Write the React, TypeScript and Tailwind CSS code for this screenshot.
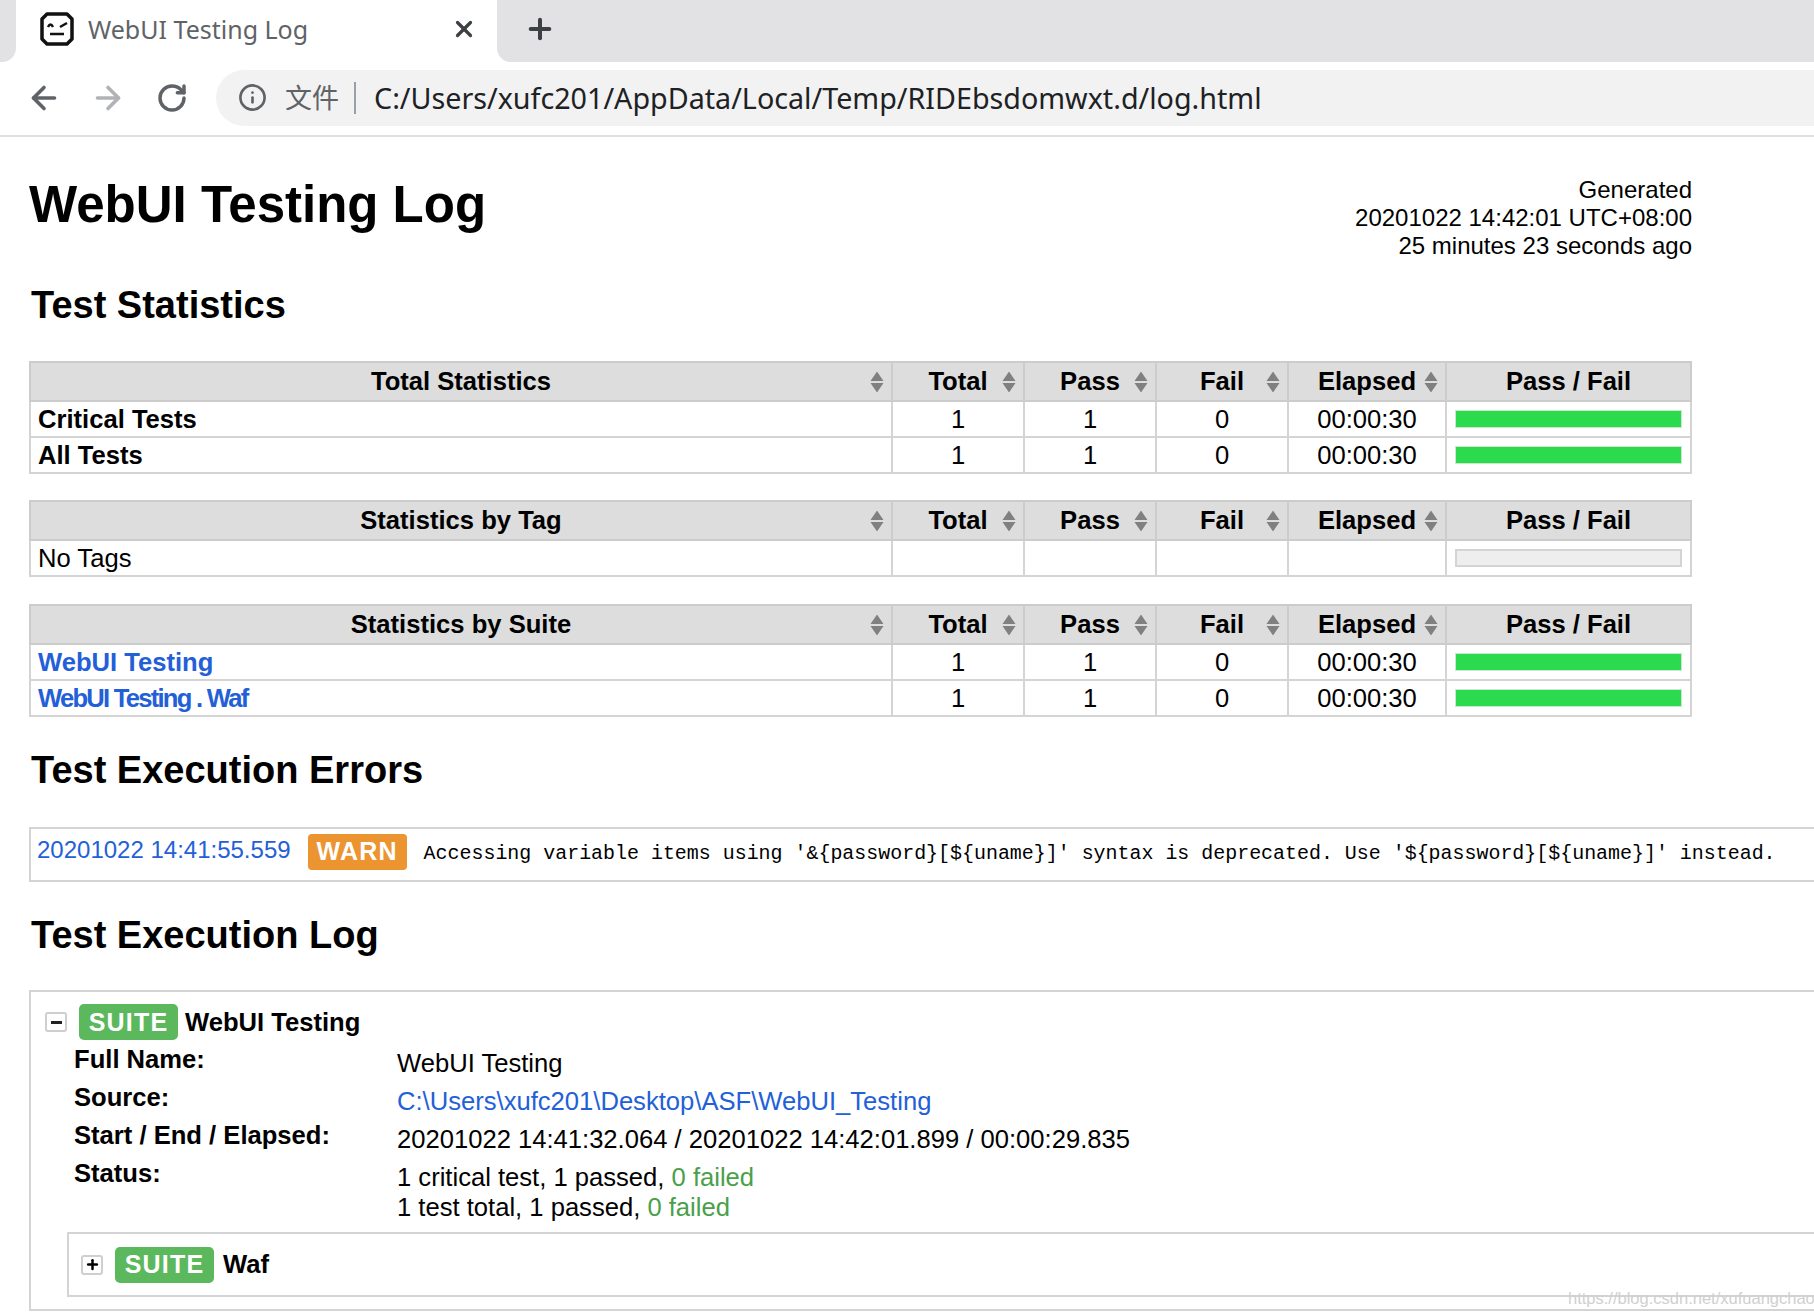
import React from "react";
import { ArrowLeft, ArrowRight, RotateCw, Info, X, Plus } from "lucide-react";

const sans = "font-['Liberation_Sans',Arial,sans-serif]";
const warnMessage = "Accessing variable items using '&{password}[${uname}]' syntax is deprecated. Use '${password}[${uname}]' instead.";

function SortIcon() {
  return (
    <svg className="absolute right-[7px] top-1/2 -translate-y-1/2" width="14" height="21" viewBox="0 0 14 21">
      <path d="M7 0 L13.500 9.500 H0.500 Z M7 21 L13.500 11.500 H0.500 Z" fill="#808080" />
    </svg>
  );
}

function RobotIcon() {
  return (
    <svg width="34" height="34" viewBox="0 0 34 34" fill="none" stroke="#111" strokeWidth="3.500">
      <path d="M7 2 H27 L32 7 V27 L27 32 H7 L2 27 V7 Z" strokeLinejoin="round" />
      <path d="M8 15 Q10.500 10 13 15 M20 15 L27 11 M10 22 H24" strokeWidth="2.500" />
    </svg>
  );
}

function Chrome() {
  return (
    <div className="bg-white">
      <div className="flex h-[62px]">
        <div className="w-[16px] bg-[#e2e2e4] rounded-br-[14px]" />
        <div className="w-[481px] rounded-t-[14px] bg-white flex items-center pl-[24px] pr-[20px] pb-[4px]">
          <RobotIcon />
          <span className="ml-[14px] pt-[2px] flex-1 font-['Noto_Sans',sans-serif] text-[25px] tracking-[0px] text-[#5f6368]">WebUI Testing Log</span>
          <X size={26} strokeWidth={3} className="text-[#3c4043]" />
        </div>
        <div className="flex-1 bg-[#e2e2e4] rounded-bl-[14px] flex items-center pl-[27px] pb-[4px]">
          <Plus size={32} strokeWidth={3} className="text-[#3c4043]" />
        </div>
      </div>
      <div className="h-[75px] border-b-2 border-[#e0e0e0] flex items-center pl-[26px] pb-[2px]">
        <ArrowLeft size={36} strokeWidth={2.400} className="text-[#5f6368]" />
        <ArrowRight size={36} strokeWidth={2.400} className="ml-[28px] text-[#b0b2b5]" />
        <RotateCw size={32} strokeWidth={2.600} className="ml-[30px] text-[#5f6368]" />
        <div className="ml-[28px] flex-1 h-[56px] rounded-l-[28px] bg-[#f2f2f2] flex items-center pl-[22px]">
          <Info size={29} strokeWidth={2.200} className="text-[#5f6368]" />
          <span className="ml-[18px] font-['Noto_Sans_CJK_SC',sans-serif] text-[27px] text-[#5f6368]">文件</span>
          <div className="ml-[15px] w-[2px] h-[32px] bg-[#9aa0a6]" />
          <span className="ml-[18px] font-['Noto_Sans',sans-serif] text-[28.700px] text-[#202124]">C:/Users/xufc201/AppData/Local/Temp/RIDEbsdomwxt.d/log.html</span>
        </div>
      </div>
    </div>
  );
}

function Bar({ empty }: { empty?: boolean }) {
  return (
    <div className={empty ? "h-[18px] mx-[8px] bg-[#eeeeee] border-2 border-[#d4d4d4]" : "h-[18px] mx-[8px] bg-[#2bdb4d] border border-[#c9e8cf]"} />
  );
}

type Row = { name: React.ReactNode; stats?: boolean };

function StatsTable({ title, rows }: { title: string; rows: Row[] }) {
  const head = ["Total", "Pass", "Fail", "Elapsed"];
  return (
    <table className="table-fixed border-collapse w-[1661px] text-[25.600px] leading-[30px] text-black">
      <colgroup>
        <col className="w-[862px]" />
        <col className="w-[132px]" />
        <col className="w-[132px]" />
        <col className="w-[132px]" />
        <col className="w-[158px]" />
        <col className="w-[245px]" />
      </colgroup>
      <thead>
        <tr className="h-[39px] bg-[#dddddd]">
          <th className="relative border-2 border-[#cccccc] font-bold pb-[2px]">
            {title}
            <SortIcon />
          </th>
          {head.map((h) => (
            <th key={h} className="relative border-2 border-[#cccccc] font-bold pb-[2px]">
              {h}
              <SortIcon />
            </th>
          ))}
          <th className="border-2 border-[#cccccc] font-bold pb-[2px]">Pass / Fail</th>
        </tr>
      </thead>
      <tbody>
        {rows.map((r, i) => (
          <tr key={i} className="h-[36px]">
            <td className="border-2 border-[#d4d4d4] pl-[7px] pb-[1px]">{r.name}</td>
            <td className="border-2 border-[#d4d4d4] text-center pb-[1px]">{r.stats ? "1" : ""}</td>
            <td className="border-2 border-[#d4d4d4] text-center pb-[1px]">{r.stats ? "1" : ""}</td>
            <td className="border-2 border-[#d4d4d4] text-center pb-[1px]">{r.stats ? "0" : ""}</td>
            <td className="border-2 border-[#d4d4d4] text-center pb-[1px]">{r.stats ? "00:00:30" : ""}</td>
            <td className="border-2 border-[#d4d4d4]">
              <Bar empty={!r.stats} />
            </td>
          </tr>
        ))}
      </tbody>
    </table>
  );
}

function Toggle({ sign }: { sign: string }) {
  return (
    <span className="w-[22px] h-[20px] rounded-[3px] border-2 border-[#cfcfcf] flex items-center justify-center">
      {sign === "+" ? <Plus size={15} strokeWidth={4} /> : <span className="w-[11px] h-[3px] bg-[#222]" />}
    </span>
  );
}

function SuiteBadge() {
  return (
    <span className="w-[99px] h-[36px] rounded-[5px] bg-[#5cb85c] text-white font-bold text-[25px] tracking-[1.200px] flex items-center justify-center">
      SUITE
    </span>
  );
}

function Meta({ label, children }: { label: string; children: React.ReactNode }) {
  return (
    <div className="grid grid-cols-[323px_1fr] leading-[30px] pb-[8px]">
      <div className="font-bold -mt-[4px]">{label}</div>
      <div>{children}</div>
    </div>
  );
}

export default function App() {
  return (
    <div className={`relative w-[1814px] h-[1316px] overflow-hidden bg-white text-black ${sans}`}>
      <Chrome />
      <main className="pl-[29px]">
        <div className="flex justify-between items-start w-[1663px] pt-[39px] h-[146px]">
          <h1 className="font-bold text-[51px] leading-[60px] -mt-[1px]">WebUI Testing Log</h1>
          <div className="text-right text-[24px] leading-[28px]">
            <div>Generated</div>
            <div>20201022 14:42:01 UTC+08:00</div>
            <div>25 minutes 23 seconds ago</div>
          </div>
        </div>
        <h2 className="font-bold text-[38px] leading-[44px] h-[78px] pl-[2px]">Test Statistics</h2>
        <StatsTable
          title="Total Statistics"
          rows={[
            { name: <b>Critical Tests</b>, stats: true },
            { name: <b>All Tests</b>, stats: true },
          ]}
        />
        <div className="h-[26px]" />
        <StatsTable title="Statistics by Tag" rows={[{ name: "No Tags" }]} />
        <div className="h-[27px]" />
        <StatsTable
          title="Statistics by Suite"
          rows={[
            { name: <b className="text-[#2360d8]">WebUI Testing</b>, stats: true },
            { name: <b className="text-[#2360d8] tracking-[-1.750px]">WebUI Testing . Waf</b>, stats: true },
          ]}
        />
        <h2 className="font-bold text-[38px] leading-[44px] mt-[31px] h-[79px] pl-[2px]">Test Execution Errors</h2>
        <div className="h-[55px] border-2 border-r-0 border-[#d4d4d4] flex items-center pl-[6px]">
          <span className="text-[24px] text-[#2360d8] -mt-[10px]">20201022 14:41:55.559</span>
          <span className="ml-[17px] -mt-[5px] w-[99px] h-[36px] rounded-[4px] bg-[#ec9430] text-white font-bold text-[25px] tracking-[1.200px] flex items-center justify-center">WARN</span>
          <span className="ml-[17px] -mt-[2px] font-['Liberation_Mono',monospace] text-[19.950px] whitespace-nowrap">{warnMessage}</span>
        </div>
        <h2 className="font-bold text-[38px] leading-[44px] mt-[31px] h-[77px] pl-[2px]">Test Execution Log</h2>
        <section className="h-[321px] border-2 border-r-0 border-[#d4d4d4] pt-[12px] text-[25.600px]">
          <div className="flex items-center pl-[14px] leading-[36px]">
            <Toggle sign="-" />
            <span className="ml-[12px]"><SuiteBadge /></span>
            <span className="ml-[7px] font-bold">WebUI Testing</span>
          </div>
          <div className="mt-[8px] pl-[43px]">
            <Meta label="Full Name:">WebUI Testing</Meta>
            <Meta label="Source:">
              <span className="text-[#2360d8]">C:\Users\xufc201\Desktop\ASF\WebUI_Testing</span>
            </Meta>
            <Meta label="Start / End / Elapsed:">20201022 14:41:32.064 / 20201022 14:42:01.899 / 00:00:29.835</Meta>
            <Meta label="Status:">
              <div>1 critical test, 1 passed, <span className="text-[#4a9f4a]">0 failed</span></div>
              <div>1 test total, 1 passed, <span className="text-[#4a9f4a]">0 failed</span></div>
            </Meta>
          </div>
          <div className="ml-[36px] mt-[2px] h-[65px] border-2 border-r-0 border-[#d4d4d4] flex items-center pl-[12px]">
            <Toggle sign="+" />
            <span className="ml-[12px]"><SuiteBadge /></span>
            <span className="ml-[9px] font-bold">Waf</span>
          </div>
        </section>
      </main>
      <div className="absolute left-[1568px] top-[1287px] text-[16.500px] leading-[22px] text-[#d0d0d0]">https://blog.csdn.net/xufuangchao</div>
    </div>
  );
}
